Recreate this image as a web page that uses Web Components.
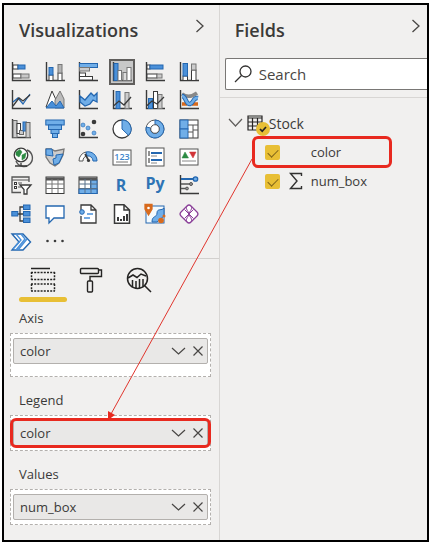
<!DOCTYPE html>
<html lang="en">
<head>
<meta charset="utf-8">
<title>Visualizations and Fields</title>
<style>
  body { margin: 0; background: #fff; color: #3b3a39; font-family: "Open Sans", "Noto Sans", sans-serif; font-size: 13px; }
</style>
</head>
<body>
<report-panes></report-panes>
<script>
const define = (name, html) => customElements.define(name, class extends HTMLElement {
  connectedCallback() {
    if (this.shadowRoot) return;
    const t = document.createElement('template');
    t.innerHTML = `<style>*{box-sizing:border-box} button{font:inherit;color:inherit;background:none;border:0;padding:0;margin:0} svg{display:block;overflow:visible}</style>` + (typeof html === 'function' ? html(this) : html);
    this.attachShadow({ mode: 'open' }).append(t.content.cloneNode(true));
  }
});

const B = '#4a90d9', D = '#2467b0', K = '#3a3a3a', G = '#b5b5b5', O = '#d86a1d';
const axis = `<path d="M1.5 0V18.5H20" fill="none" stroke="${K}" stroke-width="1.4"/>`;
const r = (x, y, w, h, f = '#fff', s = K) => `<rect x="${x}" y="${y}" width="${w}" height="${h}" fill="${f}" stroke="${s}"/>`;
const p = (d, s = K, f = 'none', w = 1.3) => `<path d="${d}" stroke="${s}" fill="${f}" stroke-width="${w}"/>`;
const c = (x, y, q, f, s = 'none', w = 1) => `<circle cx="${x}" cy="${y}" r="${q}" fill="${f}" stroke="${s}" stroke-width="${w}"/>`;

const visuals = [
  ['Stacked bar chart', axis + r(2, 3, 5, 4) + r(7, 3, 7, 4, B, D) + r(2, 12, 8, 4) + r(10, 12, 8, 4, '#c8c8c8', '#777')],
  ['Stacked column chart', axis + r(4, 13, 4, 5.5) + r(4, 5.5, 4, 7.5, B, D) + r(13, 11, 4, 7.5) + r(13, 2.5, 4, 8.5, G, '#777')],
  ['Clustered bar chart', axis + r(1.5, 1.5, 18, 4, '#70aee8', D) + r(1.5, 5.5, 10, 3.5, '#ccc', '#777') + r(1.5, 11, 6, 3.5) + r(1.5, 14.5, 13, 3.5)],
  ['Clustered column chart', axis + r(2, 1.5, 4, 17, B, D) + r(6, 8.5, 3.5, 10, '#fff', '#777') + r(11, 10.5, 4, 8, '#ddd', '#777') + r(15, 5.5, 4, 13, '#fff', '#777')],
  ['100% stacked bar chart', axis + r(2, 3, 3, 4) + r(5, 3, 13, 4, B, D) + r(2, 12, 10, 4) + r(12, 12, 5, 4, '#ccc', '#777')],
  ['100% stacked column chart', axis + r(4, 14, 4.5, 4.5) + r(4, 1.5, 4.5, 12.5, B, D) + r(12.5, 8, 4.5, 10.5) + r(12.5, 2, 4.5, 6, '#ccc', '#777')],
  ['Line chart', axis + p('M2 12L7 8L12 14L19 4', D) + p('M2 16L8 8L12 11L19 5')],
  ['Area chart', p('M1 17L7 1L12 12L15 17Z', K, '#fff', 1) + p('M10 10L15 1L19 9V18H10Z', '#777', '#bbb', 1) + p('M1 18L7 11L11 16L15 11L19 18Z', D, B, 1)],
  ['Stacked area chart', axis + p('M2 6L7 10L13 3L16 6L19 3V12L15 10L12 14L7 16L2 12Z', D, '#70aee8')],
  ['Line and stacked column chart', axis + r(4, 1.5, 4, 17, B, D) + r(13, 2.5, 4, 16, '#ccc', '#777') + p('M1.5 16L7 11L12 15L19 7')],
  ['Line and clustered column chart', axis + r(3.5, 8.5, 4, 10, B, D) + r(8.5, 1.5, 4, 17) + r(13, 4.5, 4, 14, '#ccc', '#777') + p('M1.5 16L7 11L12 14L19 7')],
  ['Ribbon chart', axis + p('M3 14H8M13 14H19', O, 'none', 3.5) + p('M3 4Q10 9 18 3', '#888', 'none', 3.5) + p('M3 6C7 6 7 15 11 14S14 7 19 8', D, 'none', 4.4) + p('M3 6C7 6 7 15 11 14S14 7 19 8', '#70aee8', 'none', 2.6)],
  ['Waterfall chart', axis + r(2, 1.5, 4, 17, '#ccc', '#666') + r(6, 4.5, 3.5, 10) + r(8.5, 11.5, 4, 4, '#ccc', '#666') + r(12, 3, 3.5, 9, B, D) + r(15, 3.5, 4, 15, '#ccc', '#666')],
  ['Funnel chart', r(.8, 1, 18.4, 5, '#70aee8', D) + r(3.5, 6, 13, 4.5, '#70aee8', D) + r(6, 10.5, 8, 4, '#70aee8', D) + r(7.5, 14.5, 5, 4, '#70aee8', D)],
  ['Scatter chart', axis + c(5, 6, 2, '#70aee8', D, .6) + c(16, 3, 2.3, K) + c(10, 9, 2, '#70aee8', D, .6) + c(5, 15, 2.3, K) + c(16, 14, 2, '#70aee8', D, .6)],
  ['Pie chart', c(10, 10, 9, '#fff', K, 1.3) + p('M10 1V10L16.5 16.3A9 9 0 0 0 10 1Z', D, '#70aee8', 1)],
  ['Donut chart', c(10, 10, 9, '#fff', '#555', 1) + p('M10 1A9 9 0 1 1 1.2 8L5.5 9A4.5 4.5 0 1 0 10 5.5Z', D, '#70aee8', 1) + c(10, 10, 4.3, '#fff', '#555', 1)],
  ['Treemap', r(1, 1, 18, 18) + r(1, 1, 8, 9, '#70aee8', D) + r(1, 10, 8, 9, '#70aee8', D) + p('M9 6H19M14 6V19M9 13H14M14 11H19', '#555', 'none', 1)],
  ['Map', p('M5 14A8.5 8.5 0 1 0 16 3', '#555', 'none', 1.4) + c(10, 8, 6.8, '#fff', K, 1.3) + p('M5 5L9 2.5L11 5L8 10L5 8ZM11 8L15 6L14 11L11 13Z', '#2d8b43', '#2d8b43', .6) + p('M10 16V19M4 19H16')],
  ['Filled map', p('M1 2H6L10 4L19 2L18 8L14 16L10 19L5 16L1 10Z', '#777', '#ccc') + p('M1 2H7L8 9L1 8ZM11 8L18 7L14 16L9 18L8 12L11 11Z', D, '#70aee8', 1)],
  ['Gauge', p('M1 14A9 9 0 0 1 8 5L9 9A5 5 0 0 0 5 14Z', '#555', '#fff', 1) + p('M8 5A9 9 0 0 1 19 14H15A5 5 0 0 0 9 9Z', D, '#70aee8', 1) + p('M7 7L11 14', K, 'none', 1.6) + c(10.5, 13.5, 1.6, K)],
  ['Card', r(1, 3, 18, 15, '#fff', '#555') + `<text x="10" y="12.500" text-anchor="middle" font-size="9" font-weight="600" fill="#3f86cc">123</text>` + p('M4 15H16', '#777', 'none', 1)],
  ['Multi-row card', r(1, 1, 18, 18, '#fff', '#555') + p('M4 4V9M4 11V16', '#777', 'none', 1.6) + p('M6 6H17M6 13H17', D, 'none', 2.2) + p('M6 9H12M6 16H12', '#888', 'none', 1)],
  ['KPI', r(1, 2, 18, 16, '#fff', '#555') + p('M3 11L6 5L9.500 11Z', '#2d8b43', '#2d8b43', .5) + p('M10.500 5H17L14 11Z', '#d13438', '#d13438', .5) + p('M3 14H17', '#888', 'none', 1)],
  ['Slicer', p('M10 17.500H1V2H18V7', '#555') + p('M1 5H18M7 8H11M7 12H10', '#555', 'none', 1) + r(3.5, 7.5, 2, 2) + r(3.5, 11.5, 2, 2) + p('M9 10H20L16 14.500V19H13V14.500Z', K, '#fff')],
  ['Table', r(1, 2, 18, 16.5) + p('M1 4H19', '#555', 'none', 3) + p('M1 9H19M1 13.500H19M7 4V18M13 4V18', '#777', 'none', 1)],
  ['Matrix', r(1, 2, 18, 16.5) + r(12.5, 5, 6.5, 13.5, '#70aee8', D) + r(1, 14, 18, 4.5, '#70aee8', D) + p('M1 4H19', '#555', 'none', 3) + p('M1 9H19M1 13.500H19M7 4V18M13 4V18', '#56708a', 'none', 1)],
  ['R script visual', `<text x="9" y="16" text-anchor="middle" font-size="16" font-weight="700" fill="#2f74b5">R</text>`],
  ['Python visual', `<text x="10" y="14" text-anchor="middle" font-size="16" font-weight="700" fill="#2f74b5">Py</text>`],
  ['Key influencers', axis + p('M2 4H15', D, 'none', 2) + c(16.500, 4, 2.2, '#70aee8', D, 1.3) + p('M2 9H11M2 13.500H8', '#555') + c(12, 9, 1.5, '#999', '#555') + c(8, 13.5, 1.4, '#999', '#555')],
  ['Decomposition tree', p('M6 10H13M9 10V3H13M9 10V17H13') + r(.8, 7.5, 6, 4.5, B, D) + r(12.5, 1, 6.5, 4.5, B, D) + r(12.5, 7.5, 6.5, 4.5, B, D) + r(12.5, 14, 6.5, 4.5, B, D)],
  ['Q and A', p('M1 2H19V14H9L4 19V14H1Z', D, '#fff')],
  ['Smart narrative', p('M3 6V1H13L18 6V19H3V12M13 1V6H18', K, '#fff') + c(4, 8, 2.3, '#70aee8', D) + p('M9 10H15M6 14H12', B)],
  ['Paginated report', p('M2.500 .8H12L17.500 6V19.200H2.500ZM12 1V6H17', K, '#fff', 1.5) + p('M6 17V13M9 17V15M12 17V12M15 17V10', K, 'none', 2)],
  ['ArcGIS map', r(1, 2, 18, 17, '#f4fafd', D) + p('M7 18C7 11 12 14 12 9S17 7 19 4V12L12 18Z', D, '#70aee8', 1) + p('M3.500 11L0 5V.500H7V5Z', O, O) + c(3.500, 4, 1.3, '#fff') + c(16, 16.500, 2.8, O) + c(19, 12, 1.5, O)],
  ['Power Apps', p('M8 2Q10 0 12 2L18 8Q20 10 18 12L12 18Q10 20 8 18L2 12Q0 10 2 8Z', '#8a3f98', '#fff', 1.2) + p('M5.500 5.500L14.500 14.500M14.500 5.500L5.500 14.500M8 2Q6 4 10 9Q14 4 12 2M8 18Q6 16 10 11Q14 16 12 18', '#8a3f98', 'none', 1)],
  ['Power Automate', p('M1 2H12L19.500 10L12 18H1L8 10Z', D, '#fff', 1.4) + p('M5 2L10 8L2 17M10 2L14 7L5 18M16 7L7 18', B, 'none', 1.4)],
  ['More visuals', `<circle cx="2.500" cy="9" r="1.300" fill="${K}"/><circle cx="10" cy="9" r="1.300" fill="${K}"/><circle cx="17.500" cy="9" r="1.300" fill="${K}"/>`]
];

define('visual-button', el => `
<style>
  :host { display: block; }
  button { display: block; width: 20px; height: 20px; }
  :host([selected]) button { background: #c8c8c8; box-shadow: 0 0 0 1px #c8c8c8, 0 0 0 3px #605e5c; }
</style>
<button type="button" aria-label="${el.getAttribute('label')}"><svg width="20" height="20" viewBox="0 0 20 20" aria-hidden="true">${visuals[el.getAttribute('index')][1]}</svg></button>`);

define('visual-gallery', `
<style>
  :host { display: grid; grid-template-columns: repeat(6, 20px); justify-content: space-between; align-content: space-between; min-height: 190px; }
</style>` + visuals.map((v, i) => `<visual-button index="${i}" label="${v[0]}"${i === 3 ? ' selected' : ''}></visual-button>`).join(''));

define('pane-header', `
<style>
  :host { display: flex; justify-content: space-between; height: 50px; }
  h2 { margin: 0; font-size: 18px; line-height: 50px; font-weight: 600; }
  button { height: 42px; }
</style>
<h2><slot></slot></h2>
<button type="button" aria-label="Collapse pane"><svg width="10" height="14" viewBox="0 0 10 14"><path d="M1.500 1L8 7L1.500 13" fill="none" stroke="#484644" stroke-width="1.300"/></svg></button>`);

define('format-tabs', `
<style>
  :host { display: flex; padding: 8px 15px 0; }
  button { display: flex; flex-direction: column; align-items: center; gap: 4px; width: 48px; }
  button::after { content: ""; width: 100%; height: 5px; border-radius: 3px; }
  button[aria-pressed=true]::after { background: #e8bf35; }
</style>
<button type="button" aria-label="Fields" aria-pressed="true"><svg width="26" height="26" fill="none" stroke="#252423" stroke-width="1.500"><path d="M1 1.500H20"/><path d="M1 5.500H25M1 12.500H25M1 17H25M1 24H25" stroke-dasharray="2 1.200"/><path d="M1.500 5V13M24.500 5V13M1.500 17V24M24.500 17V24" stroke-dasharray="2 1.200"/></svg></button>
<button type="button" aria-label="Format" aria-pressed="false"><svg width="26" height="26" fill="none" stroke="#252423" stroke-width="1.400"><rect x="2.500" y="1.500" width="18" height="5" rx="1"/><path d="M20.500 3H23.500V9.500H12V14"/><rect x="9.500" y="14" width="5" height="11" rx="1"/></svg></button>
<button type="button" aria-label="Analytics" aria-pressed="false"><svg width="26" height="26" fill="none" stroke="#252423" stroke-width="1.500"><circle cx="11.500" cy="11.500" r="10"/><path d="M18.500 18.500L25 25M2 11L7 8L11 10.500L15 7L20 9M6.500 20V13M10 21V14M13.500 21V12M17 19V12"/></svg></button>`);

define('field-well', el => `
<style>
  :host { display: block; }
  h3 { margin: 0 0 6px; padding-left: 9px; font-size: 13px; line-height: 18px; font-weight: 400; }
  .well { border: 1px dashed #b3b0ad; background: #fff; padding: 4px 2px; }
  :host([roomy]) .well { padding-bottom: 12px; }
  .pill { position: relative; display: flex; align-items: center; height: 26px; padding: 0 3px 0 6px; border: 1px solid #b3b0ad; border-radius: 2px; background: #e9e8e7; }
  .name { flex: 1; line-height: 18px; }
  button + button { margin-left: 6px; }
  :host([highlight]) .pill::after { content: ""; position: absolute; inset: -3px -4px; border: 3px solid #e8291f; border-radius: 6px; pointer-events: none; }
</style>
<h3>${el.getAttribute('label')}</h3>
<div class="well"><div class="pill"><span class="name"><slot></slot></span>
<button type="button" aria-label="Field options"><svg width="15" height="12" fill="none" stroke="#484644" stroke-width="1.200"><path d="M1 3L7.500 9L14 3"/></svg></button>
<button type="button" aria-label="Remove field"><svg width="12" height="12" fill="none" stroke="#484644" stroke-width="1.200"><path d="M1.500 1.500L10.500 10.500M10.500 1.500L1.500 10.500"/></svg></button></div></div>`);

define('visualizations-pane', `
<style>
  :host { display: block; border-right: 1px solid #d8d6d4; }
  pane-header { padding: 0 14px 0 15px; }
  visual-gallery { margin: 7px 20px 6px 7px; }
  format-tabs { border-top: 1px solid #d2d0ce; }
  .wells { display: flex; flex-direction: column; gap: 14px; padding: 7px 8px 14px 6px; }
</style>
<pane-header>Visualizations</pane-header>
<visual-gallery></visual-gallery>
<format-tabs></format-tabs>
<div class="wells">
  <field-well label="Axis" roomy>color</field-well>
  <field-well label="Legend" highlight>color</field-well>
  <field-well label="Values">num_box</field-well>
</div>`);

define('field-search', `
<style>
  :host { display: flex; align-items: center; gap: 7px; height: 32px; padding-left: 8px; background: #fff; border: 1px solid #797775; border-right: 0; border-radius: 2px 0 0 2px; box-sizing: border-box; }
  svg { flex: none; }
  input { flex: 1; width: 0; min-width: 0; border: 0; padding: 0; background: none; font: inherit; font-size: 15px; color: inherit; outline: 0; }
  input::placeholder { color: #484644; opacity: 1; }
</style>
<svg width="18" height="18" fill="none" stroke="#323130" stroke-width="1.300" aria-hidden="true"><circle cx="11.500" cy="6.500" r="5.500"/><path d="M7.500 10.500L1 17"/></svg>
<input type="text" placeholder="Search" aria-label="Search">`);

define('field-item', el => `
<style>
  :host { display: block; padding-left: 32px; }
  label { position: relative; display: flex; align-items: center; width: 140px; height: 28px; padding-left: 13px; }
  input { appearance: none; flex: none; width: 15px; height: 15px; margin: 0; border-radius: 2px; background: #e8bf35; }
  input::before { content: ""; display: block; width: 9px; height: 5px; margin: 4px 3px; border: solid #80651a; border-width: 0 0 1px 1px; transform: rotate(-45deg); }
  .type { width: 31px; padding-left: 9px; }
  :host([highlight]) label::after { content: ""; position: absolute; inset: -2px 0; border: 3px solid #e8291f; border-radius: 6px; pointer-events: none; }
</style>
<label><input type="checkbox" checked><span class="type">${el.hasAttribute('numeric') ? '<svg width="14" height="18" fill="none" stroke="#323130" stroke-width="1.400"><path d="M12.500 4V1.500H1.500L8 9L1.500 16.500H12.500V14"/></svg>' : ''}</span><slot></slot></label>`);

define('field-table', el => `
<style>
  :host { display: flex; flex-direction: column; gap: 1px; }
  button { display: flex; align-items: center; height: 28px; padding-left: 8px; font-size: 14px; text-align: left; }
  .icon { position: relative; margin: 0 6px 0 4px; }
  .badge { position: absolute; left: 9px; top: 7px; }
</style>
<button type="button" aria-expanded="true"><svg width="15" height="12" fill="none" stroke="#605e5c" stroke-width="1.200"><path d="M1 2L7.500 9L14 2"/></svg>
<span class="icon"><svg width="16" height="16" fill="none" stroke="#252423" stroke-width="1.200"><path d="M1 1H15V15H1ZM1 3H15M1 7H15M1 11H15M5.500 3V15M10.500 3V15"/></svg>
<svg class="badge" width="14" height="14"><circle cx="7" cy="7" r="7" fill="#e8bf35"/><path d="M4 7L6.200 9.200L10 5" fill="none" stroke="#252423" stroke-width="1.700"/></svg></span>${el.getAttribute('label')}</button>
<slot></slot>`);

define('fields-pane', `
<style>
  :host { display: block; min-width: 0; }
  pane-header { padding: 0 6px 0 15px; }
  field-search { margin: 3px 0 7px 5px; }
  field-table { border-top: 1px solid #d8d6d4; padding-top: 11px; }
</style>
<pane-header>Fields</pane-header>
<field-search></field-search>
<field-table label="Stock">
  <field-item highlight>color</field-item>
  <field-item numeric>num_box</field-item>
</field-table>`);

define('report-panes', `
<style>
  :host { position: relative; display: grid; grid-template-columns: minmax(0, 51fr) minmax(0, 49fr); box-sizing: border-box; min-height: calc(100vh - 4px); margin: 3px 2px 1px; border: 2px solid #000; background: #f1f0ef; }
  .arrow { position: absolute; left: 0; top: 0; width: 100%; height: 100%; pointer-events: none; }
</style>
<visualizations-pane></visualizations-pane>
<fields-pane></fields-pane>
<svg class="arrow" aria-hidden="true"><path d="M248 154L107 409" stroke="#e0352d" fill="none"/><path d="M104 415L104 406L111 410Z" fill="#e8291f"/></svg>`);
</script>
</body>
</html>
